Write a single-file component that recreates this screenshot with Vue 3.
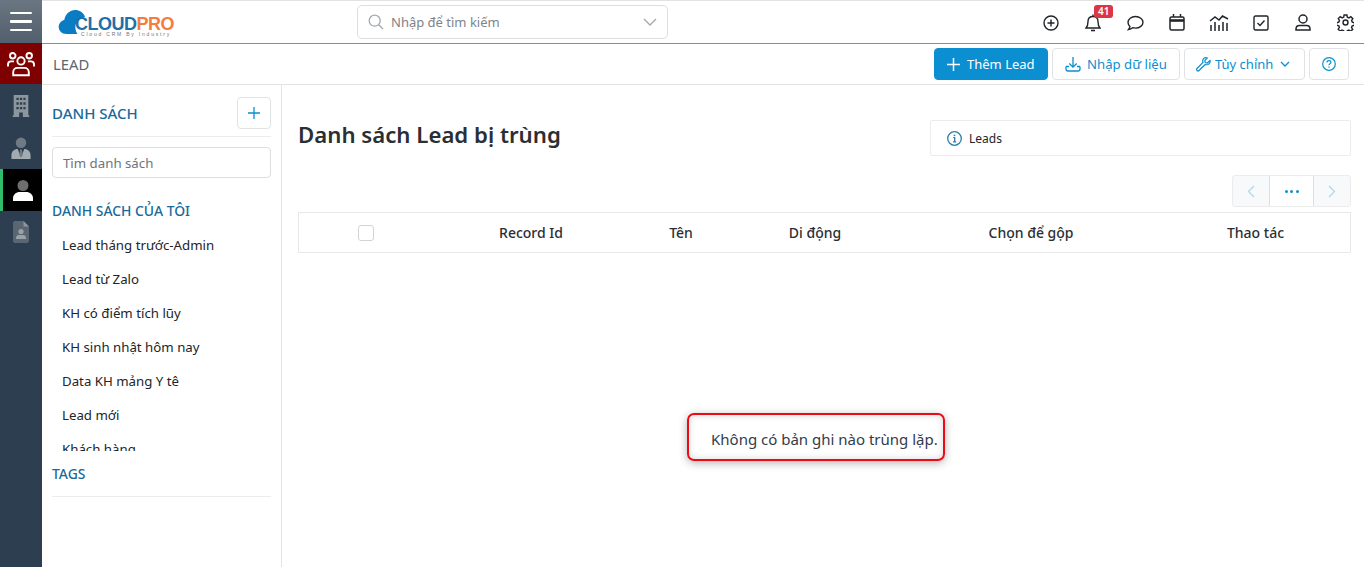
<script setup>
const lists = ['Lead tháng trước-Admin', 'Lead từ Zalo', 'KH có điểm tích lũy', 'KH sinh nhật hôm nay', 'Data KH mảng Y tê', 'Lead mới', 'Khách hàng']
</script>

<template>
  <div class="app">
    <aside class="rail">
      <button class="burger" aria-label="Menu"><span></span><span></span><span></span></button>
      <div class="rail-item red">
        <svg width="30" height="26" viewBox="0 0 32 30" fill="none" stroke="#fff" stroke-width="2.200">
          <circle cx="6.500" cy="5.500" r="3.200" /><circle cx="25.500" cy="5.500" r="3.200" /><circle cx="16" cy="11.500" r="4.200" />
          <path d="M1 18v-2.500c0-2 1.600-3.500 3.500-3.500H8M31 18v-2.500c0-2-1.600-3.500-3.500-3.500H24" />
          <path d="M7 28v-3.500c0-3 2.200-5 5-5h8c2.800 0 5 2 5 5V28z" />
        </svg>
      </div>
      <div class="rail-item tall">
        <svg width="18" height="22" viewBox="0 0 18 24" fill="#8d969d">
          <path fill-rule="evenodd" d="M1 0h16v22h1v2h-7v-5H7v5H0v-2h1zM4 3v2.500h2.500V3zm3.800 0v2.500h2.500V3zm3.800 0v2.500H14V3zM4 8v2.500h2.500V8zm3.800 0v2.500h2.500V8zm3.800 0v2.500H14V8zM4 13v2.500h2.500V13zm3.800 0v2.500h2.500V13zm3.800 0v2.500H14V13z" />
        </svg>
      </div>
      <div class="rail-item">
        <svg width="20" height="22" viewBox="0 0 20 23">
          <circle cx="10" cy="6" r="5.500" fill="#6f7a84" />
          <path d="M0 23v-4c0-4 3-6.500 6.500-6.500L10 21l3.500-8.500c3.500 0 6.500 2.500 6.500 6.500v4z" fill="#a3aab0" />
          <path d="M9 13h2l.7 6-1.700 2.500L8.300 19z" fill="#6f7a84" />
        </svg>
      </div>
      <div class="rail-item active">
        <svg width="20" height="21" viewBox="0 0 20 21">
          <circle cx="10" cy="5.500" r="5.500" fill="#6e6e6e" />
          <path d="M0 21v-2.500C0 14.500 3 12 7 12h6c4 0 7 2.500 7 6.500V21z" fill="#fff" />
        </svg>
      </div>
      <div class="rail-item">
        <svg width="16" height="22" viewBox="0 0 16 22">
          <path d="M2 0h8.500L16 5.500V20a2 2 0 0 1-2 2H2a2 2 0 0 1-2-2V2a2 2 0 0 1 2-2z" fill="#5a6773" />
          <path d="M10.500 0L16 5.500h-5.500z" fill="#8d969d" />
          <circle cx="8" cy="10.500" r="2.600" fill="#9aa2a9" />
          <path d="M3 18v-1c0-1.800 1.500-3 3-3h4c1.500 0 3 1.200 3 3v1z" fill="#9aa2a9" />
        </svg>
      </div>
    </aside>

    <div class="main">
      <header class="topbar">
        <div class="logo">
          <svg class="cloud" width="36" height="25" viewBox="0 0 36 26">
            <path d="M8 25C3 25 0 21.500 0 17.500c0-3.600 2.500-6.500 5.800-7.200C6.800 4.500 11.500 0 17 0c4.700 0 8.700 2.800 10.500 7C24 7.500 21 9 19 12c-2.500 3.800-2 9 .5 13z" fill="#0a7cc4" />
          </svg>
          <div class="logo-text">
            <div class="logo-name"><span class="cl">CLOUD</span><span class="pro">PRO</span></div>
            <div class="logo-sub">Cloud CRM By Industry</div>
          </div>
        </div>
        <div class="search">
          <svg width="16" height="16" viewBox="0 0 16 16" fill="none" stroke="#a3a8ae" stroke-width="1.300"><circle cx="6.700" cy="6.700" r="5.500" /><path d="M10.700 10.700L15 15" /></svg>
          <span class="search-ph">Nhập để tìm kiếm</span>
          <svg class="search-chev" width="14" height="8" viewBox="0 0 14 8" fill="none" stroke="#a3a8ae" stroke-width="1.300"><path d="M1 1l6 6 6-6" /></svg>
        </div>
        <nav class="tools">
          <svg width="16" height="16" viewBox="0 0 16 16" fill="none" stroke="#212529" stroke-width="1.400"><circle cx="8" cy="8" r="7" /><path d="M8 4.500v7M4.500 8h7" /></svg>
          <div class="bell">
            <svg width="16" height="18" viewBox="0 0 16 18" fill="none" stroke="#212529" stroke-width="1.400"><path d="M1 14c1.500-1.500 2-3 2-6.500C3 4.500 5 2.500 8 2.500s5 2 5 5c0 3.500.5 5 2 6.500z" /><path d="M8 .5v2" /><path d="M6 16.500h4" stroke-width="1.600" /></svg>
            <span class="badge">41</span>
          </div>
          <svg width="17" height="16" viewBox="0 0 17 16" fill="none" stroke="#212529" stroke-width="1.400"><path d="M8.500 1.500c4.200 0 7.500 2.600 7.500 5.800s-3.300 5.800-7.500 5.800c-1 0-2-.1-2.800-.4-1 .9-2.500 1.600-4.200 1.800.8-.9 1.300-1.900 1.400-3.100C1.700 10.300 1 8.900 1 7.300 1 4.100 4.300 1.500 8.500 1.500z" /></svg>
          <svg width="16" height="17" viewBox="0 0 16 17" fill="none" stroke="#212529" stroke-width="1.500"><rect x="1" y="3" width="14" height="13" rx="1.500" /><path d="M1 6.500h14" stroke-width="2.600" /><path d="M4.500 0v3M11.500 0v3" /></svg>
          <svg width="20" height="18" viewBox="0 0 20 18" fill="none" stroke="#212529" stroke-width="1.500"><path d="M1 7l5-4 4 3 3.500-4L19 5" /><path d="M2 11v6M6 8v9M10 11v6M14 8v9M18 9v8" /></svg>
          <svg width="16" height="16" viewBox="0 0 16 16" fill="none" stroke="#212529" stroke-width="1.400"><rect x="1" y="1" width="14" height="14" rx="1.500" /><path d="M4.500 8l2.500 2.500 4.500-5" /></svg>
          <svg width="16" height="17" viewBox="0 0 16 17" fill="none" stroke="#212529" stroke-width="1.500"><circle cx="8" cy="5" r="4" /><path d="M1 16v-1c0-2 1.500-3.500 3.500-3.500h7c2 0 3.500 1.500 3.500 3.500v1z" /></svg>
          <svg width="17" height="17" viewBox="0 0 24 24" fill="none" stroke="#212529" stroke-width="2"><circle cx="12" cy="12" r="3.500" /><path d="M10 1.500h4l.6 3 2.300 1 2.600-1.700 2.800 2.800-1.700 2.600 1 2.300 2.900.6v4l-3 .6-1 2.300 1.700 2.600-2.800 2.800-2.600-1.700-2.300 1-.5 2.800h-4l-.6-3-2.300-1-2.600 1.700-2.800-2.800 1.700-2.600-1-2.300-2.900-.5v-4l3-.6 1-2.300-1.700-2.600 2.800-2.800 2.600 1.700 2.300-1z" /></svg>
        </nav>
      </header>

      <div class="subbar">
        <div class="crumb">LEAD</div>
        <div class="actions">
          <button class="btn primary">
            <svg width="13" height="13" viewBox="0 0 13 13" stroke="#fff" stroke-width="1.500"><path d="M6.500 0v13M0 6.500h13" /></svg>
            Thêm Lead
          </button>
          <button class="btn import">
            <svg width="16" height="15" viewBox="0 0 16 15" fill="none" stroke="#0b8fd0" stroke-width="1.300"><path d="M8 0v10M4.300 6.500L8 10.200l3.700-3.700" /><path d="M1 9.500V12c0 1.200.8 2 2 2h10c1.200 0 2-.8 2-2V9.500" /><path d="M1 9.500h3M12 9.500h3" /></svg>
            Nhập dữ liệu
          </button>
          <button class="btn custom">
            <svg width="15" height="15" viewBox="0 0 15 15" fill="none" stroke="#0b8fd0" stroke-width="1.200"><path d="M14 3.500L11.300 6 9.200 5.600 8.800 3.500 11.300 1C9.500.3 7.600 1 7 2.500c-.4 1-.3 2 0 2.800L1 11.500c-.6.600-.6 1.500 0 2s1.500.6 2 0l6.200-6c.9.300 1.900.3 2.800 0 1.600-.6 2.500-2.500 2-4z" /></svg>
            Tùy chỉnh
            <svg class="chev" width="10" height="6" viewBox="0 0 10 6" fill="none" stroke="#0b8fd0" stroke-width="1.300"><path d="M1 1l4 4 4-4" /></svg>
          </button>
          <button class="btn icon" aria-label="Help">
            <svg width="14" height="14" viewBox="0 0 14 14" fill="none" stroke="#0b8fd0" stroke-width="1.200"><circle cx="7" cy="7" r="6.300" /><path d="M5 5.400C5 4.200 5.900 3.600 7 3.600s2 .7 2 1.700c0 1.500-2 1.500-2 3" /><path d="M7 9.500v1.200" /></svg>
          </button>
        </div>
      </div>

      <div class="content">
        <section class="lists">
          <div class="lists-head">
            <h3>DANH SÁCH</h3>
            <button class="add" aria-label="Add">
              <svg width="12" height="12" viewBox="0 0 12 12" stroke="#0b8fd0" stroke-width="1.300"><path d="M6 0v12M0 6h12" /></svg>
            </button>
          </div>
          <div class="list-search">Tìm danh sách</div>
          <h4>DANH SÁCH CỦA TÔI</h4>
          <ul>
            <li v-for="item in lists" :key="item">{{ item }}</li>
          </ul>
          <h4 class="tags">TAGS</h4>
        </section>

        <section class="page">
          <div class="page-head">
            <h1>Danh sách Lead bị trùng</h1>
            <div class="info">
              <svg width="15" height="15" viewBox="0 0 15 15" fill="none" stroke="#2a7fa8" stroke-width="1.300"><circle cx="7.500" cy="7.500" r="6.800" /><path d="M6.300 6.700h1.400v4M6 10.800h3.200" /><path d="M7.500 3.600v1.500" stroke-width="1.600" /></svg>
              <span>Leads</span>
            </div>
          </div>
          <div class="pager">
            <button class="pg off"><svg width="8" height="13" viewBox="0 0 8 13" fill="none" stroke="#a9d8f3" stroke-width="1.300"><path d="M7 1L1.500 6.500 7 12" /></svg></button>
            <button class="pg mid"><i></i><i></i><i></i></button>
            <button class="pg off"><svg width="8" height="13" viewBox="0 0 8 13" fill="none" stroke="#a9d8f3" stroke-width="1.300"><path d="M1 1l5.500 5.500L1 12" /></svg></button>
          </div>
          <div class="thead">
            <div class="cell check"><span class="box"></span></div>
            <div class="cell">Record Id</div>
            <div class="cell">Tên</div>
            <div class="cell">Di động</div>
            <div class="cell">Chọn để gộp</div>
            <div class="cell">Thao tác</div>
          </div>
          <div class="empty">Không có bản ghi nào trùng lặp.</div>
        </section>
      </div>
    </div>
  </div>
</template>

<style scoped>
* { box-sizing: border-box; }
.app {
  display: flex;
  width: 1364px;
  height: 567px;
  overflow: hidden;
  background: #fff;
  color: #212529;
  font-family: "Noto Sans", "Open Sans", sans-serif;
  font-size: 13px;
}
button { font-family: inherit; cursor: pointer; }
.rail {
  width: 42px;
  flex: none;
  background: #2c3e50;
  display: flex;
  flex-direction: column;
}
.burger {
  height: 43px;
  flex: none;
  border: 0;
  padding: 0 10px;
  background: linear-gradient(#6a7681, #525f6c);
  display: flex;
  flex-direction: column;
  justify-content: center;
  gap: 6px;
}
.burger span { display: block; width: 22px; height: 2.500px; background: #fff; border-radius: 1px; }
.rail-item { height: 42px; flex: none; display: flex; align-items: center; justify-content: center; }
.rail-item.red { background: #7f0000; height: 41px; }
.rail-item.tall { height: 43px; }
.rail-item.active { background: #000; border-left: 3px solid #2ebd6b; }
.main { flex: 1; min-width: 0; display: flex; flex-direction: column; }
.topbar {
  height: 44px;
  flex: none;
  border-top: 1px solid #e3e3e3;
  border-bottom: 1px solid #4caf7d;
  display: flex;
  align-items: center;
  padding-left: 16px;
}
.logo { display: flex; align-items: flex-start; width: 299px; height: 27px; margin-top: 2px; }
.cloud { flex: none; }
.logo-text { margin-left: -19px; padding-top: 6px; }
.logo-name { font-family: "Liberation Sans", sans-serif; font-weight: 700; font-size: 18px; line-height: 16px; letter-spacing: -.5px; }
.cl { color: #1f6fa8; }
.pro { color: #f47c3c; }
.logo-sub { font-family: "Liberation Sans", sans-serif; font-size: 5px; line-height: 5px; letter-spacing: 1.800px; color: #70757c; margin-left: 6px; white-space: nowrap; }
.search {
  width: 311px;
  height: 34px;
  border: 1px solid #dedede;
  border-radius: 5px;
  display: flex;
  align-items: center;
  padding: 0 10px;
}
.search-ph { margin-left: 7px; color: #7d8389; font-size: 13px; }
.search-chev { margin-left: auto; }
.tools {
  margin-left: auto;
  margin-right: -2px;
  padding-top: 1px;
  display: grid;
  grid-template-columns: repeat(8, 42px);
  justify-items: center;
  align-items: center;
}
.bell { position: relative; display: flex; }
.badge {
  position: absolute;
  top: -9px;
  left: 9px;
  background: #dc3545;
  color: #fff;
  font-size: 10px;
  line-height: 13px;
  font-weight: 600;
  padding: 0 4px;
  border-radius: 3px;
}
.subbar {
  height: 41px;
  flex: none;
  border-bottom: 1px solid #e3e3e3;
  display: flex;
  align-items: center;
  padding: 0 15px 0 11px;
}
.crumb { font-size: 14.800px; color: #5c6670; }
.actions { margin-left: auto; display: flex; gap: 4px; }
.btn {
  height: 32px;
  border: 1px solid #dfe3e6;
  border-radius: 4px;
  background: #fff;
  color: #0b8fd0;
  font-size: 13px;
  display: flex;
  align-items: center;
  gap: 6px;
  padding: 0 12px;
}
.btn.primary { width: 114px; background: #0b8fd0; border-color: #0b8fd0; color: #fff; gap: 7px; }
.btn.import { width: 128px; font-size: 13.200px; }
.btn.custom { width: 121px; gap: 4px; padding: 0 11px; }
.btn .chev { margin-left: 3px; }
.btn.icon { width: 40px; justify-content: center; padding: 0; }
.content { flex: 1; display: flex; min-height: 0; }
.lists {
  width: 240px;
  flex: none;
  border-right: 1px solid #e3e3e3;
  padding: 12px 10px 0 10px;
}
.lists-head {
  height: 40px;
  display: flex;
  align-items: flex-start;
  justify-content: space-between;
  border-bottom: 1px solid #ececec;
}
.lists-head h3 { margin: 6px 0 0; font-size: 15px; font-weight: 500; color: #19699b; line-height: 20px; }
.add {
  width: 34px;
  height: 32px;
  border: 1px solid #dfe3e6;
  border-radius: 4px;
  background: #fff;
  padding: 0;
  display: flex;
  align-items: center;
  justify-content: center;
}
.list-search {
  margin-top: 10px;
  height: 31px;
  border: 1px solid #dedede;
  border-radius: 4px;
  padding: 0 10px;
  line-height: 30px;
  font-size: 13.250px;
  color: #6c757d;
}
.lists h4 { margin: 24px 0 0; font-size: 13.900px; font-weight: 500; color: #19699b; line-height: 18px; }
ul {
  list-style: none;
  margin: 8px 0 0;
  padding: 0 0 0 10px;
  height: 223px;
  overflow: hidden;
}
li { height: 34px; line-height: 34px; font-size: 13.250px; color: #212529; white-space: nowrap; }
.lists h4.tags { margin-top: 14px; padding-bottom: 13px; border-bottom: 1px solid #ececec; line-height: 18px; height: 32px; }
.page { flex: 1; min-width: 0; padding: 0 13px 0 16px; }
.page-head { display: flex; align-items: flex-start; justify-content: space-between; padding-top: 35px; height: 82px; }
h1 { margin: 0; font-size: 22.200px; line-height: 30px; font-weight: 600; color: #2b2f33; }
.info {
  width: 421px;
  height: 36px;
  border: 1px solid #ececec;
  border-radius: 2px;
  display: flex;
  align-items: center;
  gap: 7px;
  padding-left: 16px;
  font-size: 12px;
}
.pager {
  margin-top: 8px;
  margin-left: auto;
  width: 119px;
  height: 32px;
  display: flex;
  background: #f8f9fa;
  border: 1px solid #ececec;
  border-radius: 3px;
}
.pg { border: 0; background: transparent; padding: 0; display: flex; align-items: center; justify-content: center; }
.pg.off { width: 36px; }
.pg.mid { width: 45px; flex: none; background: #fff; border-left: 1px solid #dfdfdf; border-right: 1px solid #dfdfdf; gap: 2.500px; }
.pg.mid i { width: 3px; height: 3px; border-radius: 50%; background: #0b8fd0; }
.thead {
  margin-top: 5px;
  height: 41px;
  border: 1px solid #e8e8e8;
  display: grid;
  grid-template-columns: 130px 204px 96px 172px 260px 1fr;
  align-items: center;
}
.cell { text-align: center; font-weight: 500; font-size: 14px; color: #2b2f33; }
.cell.check { display: flex; justify-content: center; padding-left: 3px; }
.box { width: 16px; height: 16px; border: 1px solid #d0d4d8; border-radius: 3px; }
.empty {
  width: 258px;
  height: 48px;
  margin: 160px 0 0 389px;
  border: 2px solid #ee0a14;
  border-radius: 7px;
  box-shadow: 0 2px 8px rgba(0, 0, 0, .3), inset 0 0 7px rgba(0, 0, 0, .16);
  padding-left: 22px;
  line-height: 49px;
  font-size: 15px;
  color: #333c4a;
  white-space: nowrap;
}
</style>
